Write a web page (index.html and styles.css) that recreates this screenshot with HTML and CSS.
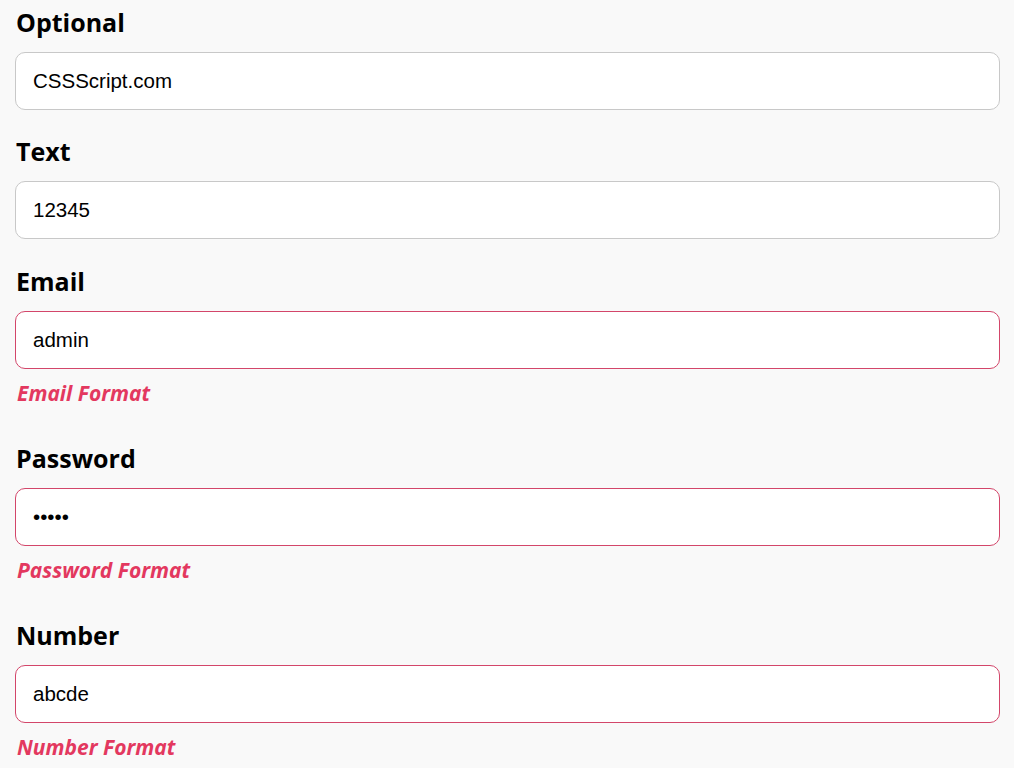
FILE: index.html
```html
<!DOCTYPE html>
<html lang="en">
<head>
  <meta charset="UTF-8" />
  <meta name="viewport" content="width=device-width, initial-scale=1" />
  <title>Form Validation</title>
  <link rel="stylesheet" href="styles.css">
</head>
<body>
  <form id="demo-form" novalidate>
    <!-- Optional field, no rules -->
    <div class="field">
      <label for="optional">Optional</label>
      <input type="text" id="optional" name="optional" value="CSSScript.com" />
    </div>

    <!-- Plain text field -->
    <div class="field">
      <label for="text">Text</label>
      <input type="text" id="text" name="text" value="12345" />
    </div>

    <!-- Email field -->
    <div class="field invalid">
      <label for="email">Email</label>
      <input type="text" id="email" name="email" value="admin" />
      <output class="error">Email Format</output>
    </div>

    <!-- Password field -->
    <div class="field invalid">
      <label for="password">Password</label>
      <input type="password" id="password" name="password" value="12345" />
      <output class="error">Password Format</output>
    </div>

    <!-- Number field -->
    <div class="field invalid">
      <label for="number">Number</label>
      <input type="text" id="number" name="number" value="abcde" />
      <output class="error">Number Format</output>
    </div>
  </form>
</body>
</html>
```

FILE: styles.css
```css
/* Base styles */
body {
  margin: 0;
  padding: 4.5px 14px 0 15px;
  background: #f9f9f9;
  font-family: "Open Sans", "Noto Sans", sans-serif;
}
form {
  display: flex;
  flex-direction: column;
  gap: 24.5px;
}
.field {
  display: flex;
  flex-direction: column;
}
label {
  display: block;
  font-weight: bold;
  font-size: 25px;
  line-height: 34px;
  margin-bottom: 13px;
  padding-left: 1px;
  color: #000;
}
input[type="text"],
input[type="password"] {
  width: 100%;
  height: 58px;
  padding: 0 17px;
  border: 1px solid #c8c8c8;
  border-radius: 10px;
  background: #fff;
  box-sizing: border-box;
  font-family: "Liberation Sans", Arial, sans-serif;
  font-size: 20.5px;
  color: #000;
  outline: none;
}
/* Invalid state */
.invalid input {
  border-color: #d3466a;
}
.error {
  display: block;
  margin: 9.5px 0 8px;
  padding-left: 2px;
  font-size: 21px;
  line-height: 30px;
  font-weight: bold;
  font-style: italic;
  color: #e3385f;
}
```
